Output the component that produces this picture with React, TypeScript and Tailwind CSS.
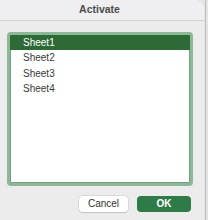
import React from "react";

export default function App() {
  const sheets = ["Sheet1", "Sheet2", "Sheet3", "Sheet4"];
  return (
    <div
      className="flex w-[208px] h-[220px] bg-[#e4e4e4] overflow-hidden"
      style={{ fontFamily: '"Liberation Sans", Arial, sans-serif' }}
    >
      <div className="flex flex-col w-[204px] h-full bg-[#ececec] rounded-tr-[9px] overflow-hidden">
        <div className="h-[21px] shrink-0 flex items-center justify-center pr-[5px] bg-[#efeef0] border-b border-[#cfcfcf] text-[10.5px] font-bold text-[#4c4c4c]">
          Activate
        </div>
        <div className="ml-[7px] mt-[11px] w-[186px] h-[154px] rounded-[4px] border-[3px] border-[#8cb898] bg-white shadow-[inset_0_0_0_1px_#6fa27c] overflow-hidden">
          {sheets.map((s, i) => (
            <div
              key={s}
              className={
                i === 0
                  ? "h-[15.3px] flex items-center pl-[13px] text-[10px] text-white bg-[#2d6a35]"
                  : "h-[15.3px] flex items-center pl-[13px] text-[10px] text-[#3a3a3a]"
              }
            >
              {s}
            </div>
          ))}
        </div>
        <div className="flex justify-end gap-[9px] mt-[10px] pr-[13px]">
          <button className="w-[49px] h-[15.5px] flex items-center justify-center rounded-[4px] bg-white text-[10px] text-[#333] shadow-[0_0_0_0.5px_#c8c8c8,0_0.5px_1px_rgba(0,0,0,0.2)]">
            Cancel
          </button>
          <button className="w-[54px] h-[15.5px] flex items-center justify-center rounded-[4px] bg-[#2f7b47] text-[10px] font-bold text-white">
            OK
          </button>
        </div>
      </div>
      <div className="flex-1 flex">
        <div className="w-[1px] ml-[1px] h-full bg-[#bdbdbd]"></div>
      </div>
    </div>
  );
}
